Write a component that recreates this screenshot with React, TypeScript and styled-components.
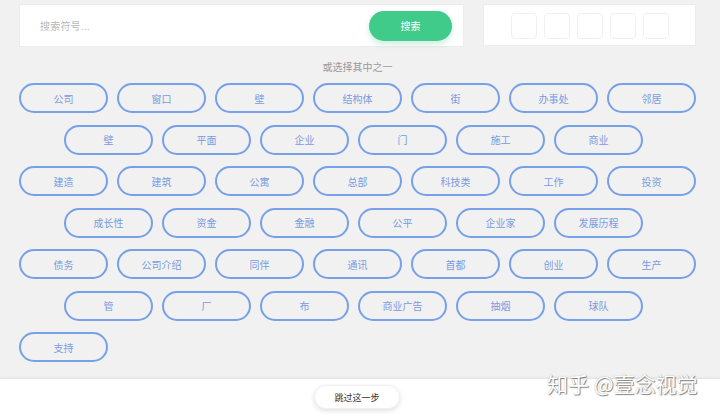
import React from "react";
import styled, { createGlobalStyle } from "styled-components";

const GlobalStyle = createGlobalStyle`
  html, body {
    margin: 0;
    padding: 0;
    background: #f1f1f1;
    font-family: "Noto Sans CJK SC", "Noto Sans", sans-serif;
  }
  * { box-sizing: border-box; }
`;

const Page = styled.div`
  position: relative;
  width: 720px;
  height: 414px;
  display: flex;
  flex-direction: column;
  overflow: hidden;
  background: #f1f1f1;
`;

const Main = styled.div`
  flex: 1;
  padding: 4px 24px 0 19px;
  display: flex;
  flex-direction: column;
`;

const TopBar = styled.div`
  display: flex;
  gap: 19px;
  align-items: flex-start;
`;

const SearchBox = styled.div`
  width: 445px;
  height: 43px;
  background: #fff;
  border: 1px solid #ececec;
  display: flex;
  align-items: center;
  justify-content: space-between;
  padding: 0 11px 0 20px;
`;

const Placeholder = styled.span`
  font-size: 10px;
  color: #b8b8b8;
  letter-spacing: 0.2px;
`;

const SearchButton = styled.button`
  width: 83px;
  height: 30px;
  border: none;
  border-radius: 15px;
  background: #41cb8b;
  color: #fff;
  font-family: inherit;
  font-size: 10px;
  box-shadow: 0 3px 6px rgba(60, 190, 130, 0.28);
  padding: 0;
`;

const SlotBox = styled.div`
  width: 213px;
  height: 42px;
  background: #fff;
  border: 1px solid #ececec;
  display: flex;
  align-items: center;
  justify-content: center;
  gap: 7px;
  padding-top: 1px;
`;

const Slot = styled.div`
  width: 26px;
  height: 26px;
  border: 1px solid #f0f0f0;
  border-radius: 4px;
  background: #fff;
`;

const Hint = styled.div`
  margin-top: 13px;
  width: 677px;
  text-align: center;
  font-size: 10px;
  line-height: 14px;
  color: #9a9a9a;
`;

const Grid = styled.div`
  margin-top: 9px;
  display: flex;
  flex-direction: column;
  gap: 11.5px;
`;

const Row = styled.div<{ $offset: boolean }>`
  display: flex;
  gap: 9px;
  padding-left: ${(p) => (p.$offset ? "45px" : "0")};
`;

const Pill = styled.button`
  width: 89px;
  height: 30px;
  border: 2px solid #76a0e8;
  border-radius: 15px;
  background: transparent;
  color: #7a9be0;
  font-family: inherit;
  font-size: 10px;
  padding: 0;
  display: flex;
  align-items: center;
  justify-content: center;
`;

const Footer = styled.div`
  height: 36px;
  background: #fff;
  border-top: 1px solid #e4e4e4;
  box-shadow: 0 -1px 3px rgba(0, 0, 0, 0.04);
  display: flex;
  justify-content: center;
  padding: 6px 6px 0 0;
`;

const SkipButton = styled.button`
  width: 86px;
  height: 24px;
  border: 1px solid #f0f0f0;
  border-radius: 12px;
  background: #fff;
  color: #333;
  font-family: inherit;
  font-size: 9px;
  padding: 0;
  box-shadow: 0 2px 5px rgba(0, 0, 0, 0.12);
`;

const Watermark = styled.div`
  position: absolute;
  left: 547px;
  top: 369px;
  font-size: 21px;
  line-height: 28px;
  color: #ffffff;
  text-shadow: 1px 1px 1px rgba(80, 80, 80, 0.7), 0 0 1px rgba(80, 80, 80, 0.45);
  white-space: nowrap;
`;

const rows: string[][] = [
  ["公司", "窗口", "壁", "结构体", "街", "办事处", "邻居"],
  ["壁", "平面", "企业", "门", "施工", "商业"],
  ["建造", "建筑", "公寓", "总部", "科技类", "工作", "投资"],
  ["成长性", "资金", "金融", "公平", "企业家", "发展历程"],
  ["债务", "公司介绍", "同伴", "通讯", "首都", "创业", "生产"],
  ["管", "厂", "布", "商业广告", "抽烟", "球队"],
  ["支持"],
];

export default function App() {
  return (
    <Page>
      <GlobalStyle />
      <Main>
        <TopBar>
          <SearchBox>
            <Placeholder>搜索符号...</Placeholder>
            <SearchButton>搜索</SearchButton>
          </SearchBox>
          <SlotBox>
            {[0, 1, 2, 3, 4].map((i) => (
              <Slot key={i} />
            ))}
          </SlotBox>
        </TopBar>
        <Hint>或选择其中之一</Hint>
        <Grid>
          {rows.map((r, i) => (
            <Row key={i} $offset={i % 2 === 1}>
              {r.map((t, j) => (
                <Pill key={j}>{t}</Pill>
              ))}
            </Row>
          ))}
        </Grid>
      </Main>
      <Footer>
        <SkipButton>跳过这一步</SkipButton>
      </Footer>
      <Watermark>知乎 @壹念视觉</Watermark>
    </Page>
  );
}
